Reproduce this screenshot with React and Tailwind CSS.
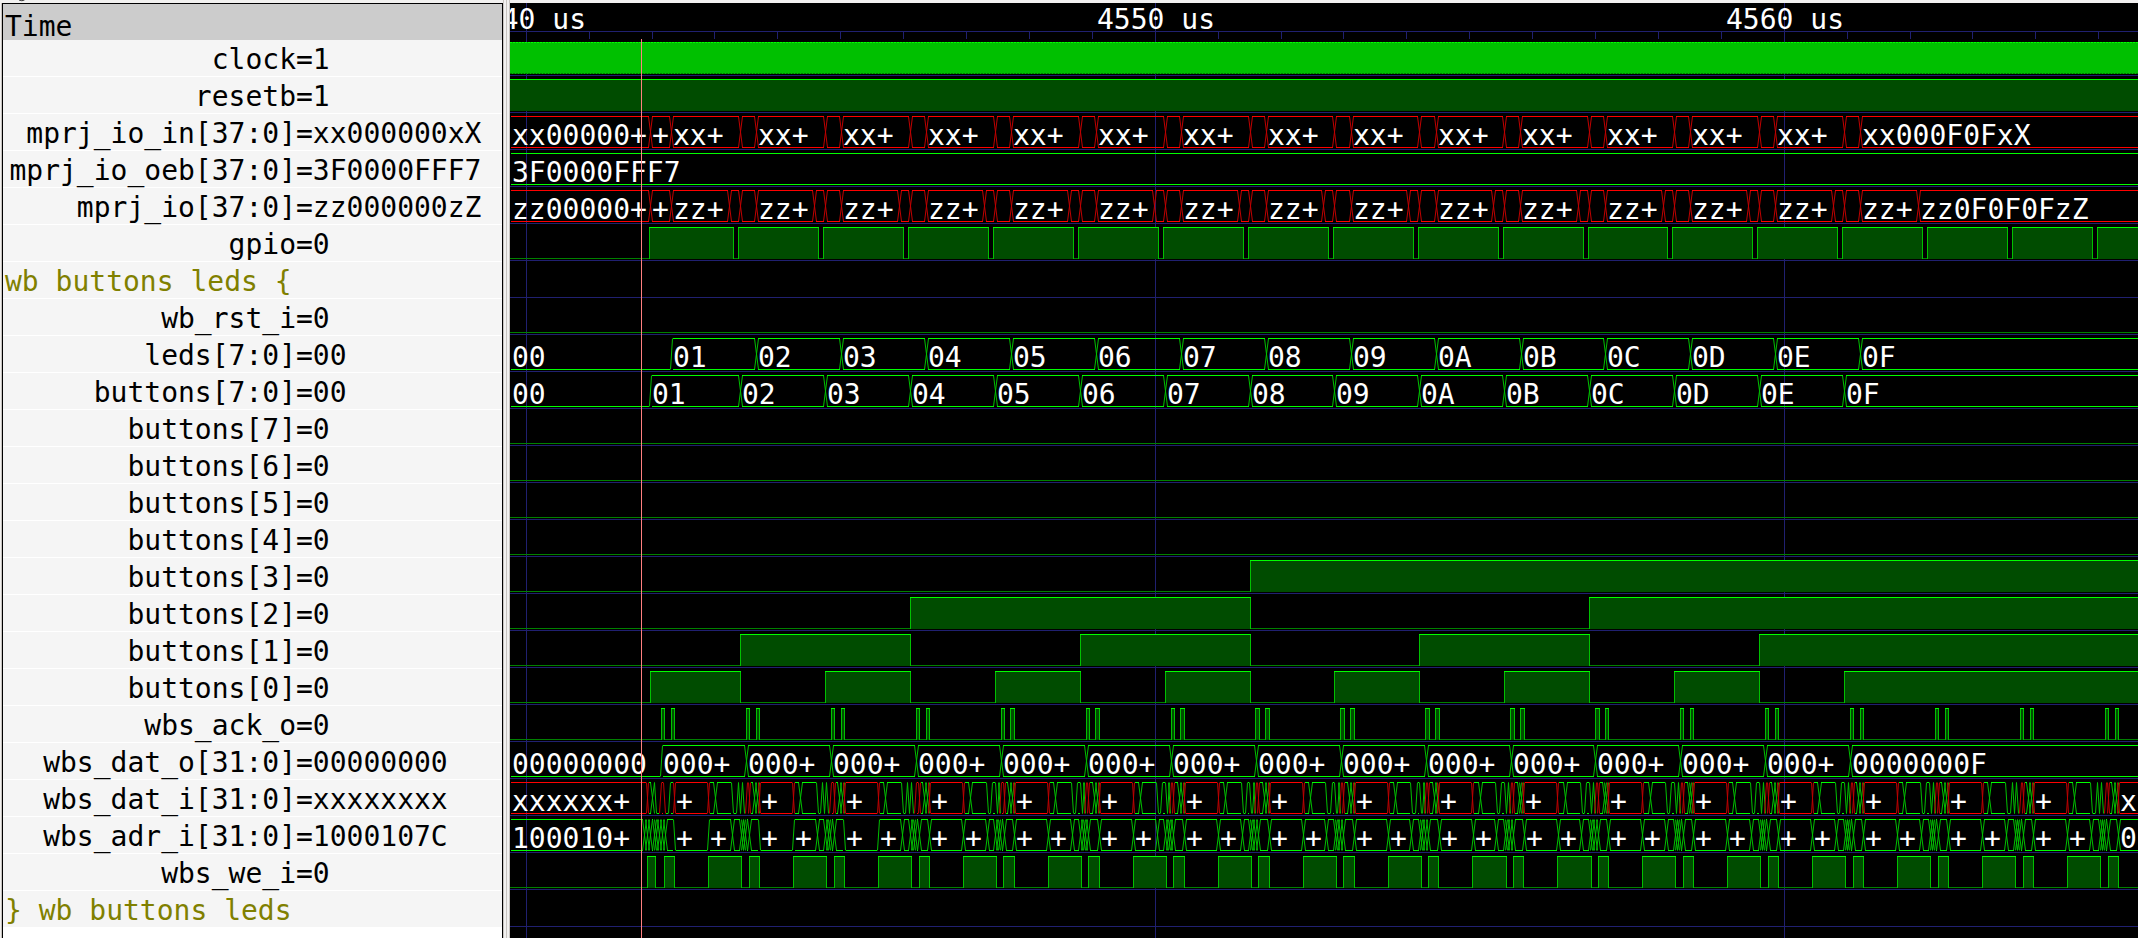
import React from "react";

const ROW = 37;
const ORIGIN = 510;
const PERIOD = 84.94;
const END = 4000;
const HI = 3.5;
const LO = 34.5;
const GRID = [16, 645, 1274];

const range = (n) => Array.from({ length: n }, (_, i) => i);
const snap = (x) => Math.floor(x) - ORIGIN;

/* Bus: list of [time, kind, label]; kind is v (value), x (unknown) or z (zero). */
const A = 740.4;
const at = (offset, k) => offset + PERIOD * k;

const ioIn = [
  [510, "x", "xx00000+"],
  [650.5, "x", "+"],
  [671.5, "x", "xx+"],
  ...range(14).flatMap((k) => [
    [at(A, k), "x", ""],
    [at(A + 16.1, k), "x", k === 13 ? "xx000F0FxX" : "xx+"],
  ]),
];

const ioPads = [
  [510, "x", "zz00000+"],
  [650.5, "x", "+"],
  [671.5, "x", "zz+"],
  ...range(14).flatMap((k) => [
    [at(A - 11, k), "x", ""],
    [at(A, k), "x", ""],
    [at(A + 16.1, k), "x", "zz+"],
  ]),
  [at(A - 11, 14), "x", "zz0F0F0FzZ"],
];

const hex = (n) => "0" + n.toString(16).toUpperCase();

const leds = [
  [510, "z", "00"],
  ...range(15).map((k) => [at(671.6, k), "v", hex(k + 1)]),
];

const buttons = [
  [510, "z", "00"],
  [650.7, "v", "01"],
  ...range(14).map((k) => [at(A, k), "v", hex(k + 2)]),
];

const datO = [
  [510, "z", "00000000"],
  ...range(15).map((k) => [at(661.6, k), "v", k === 14 ? "0000000F" : "000+"]),
];

const datI = [
  [510, "x", "xxxxxx+"],
  [647, "v", ""],
  [652.3, "v", ""],
  [655.3, "z", ""],
  [660.7, "x", ""],
  [664, "z", ""],
  [669.5, "v", ""],
  ...range(17).flatMap((k) => [
    [at(674.5, k), "x", "+"],
    [at(708.5, k), "v", ""],
    [at(715.7, k), "v", ""],
    [at(732.4, k), "z", ""],
    ...(k > 2 && k < 15
      ? [
          [at(736.5, k), "v", ""],
          [at(741.3, k), "z", ""],
          [at(743.5, k), "v", ""],
          [at(745, k), "z", ""],
        ]
      : [
          [at(737, k), "v", ""],
          [at(739, k), "z", ""],
          [at(741, k), "v", ""],
          [at(743, k), "z", ""],
        ]),
    [at(746, k), "x", ""],
    [at(749.2, k), "v", ""],
    [at(754.7, k), "v", ""],
    [at(757.5, k), "v", ""],
  ]),
  [at(674.5, 17), "x", "x"],
];

const adrI = [
  [510, "v", "100010+"],
  ...[644.3, 647.3, 650.7, 654, 656.7, 659.3, 662, 665].map((t) => [t, "v", ""]),
  ...range(17).flatMap((k) => [
    [at(674.6, k), k < 3 ? "z" : "v", "+"],
    [at(708.6, k), "v", "+"],
    [at(732.4, k), "v", ""],
    [at(741, k), "v", ""],
    [at(743.3, k), "v", ""],
    [at(745.6, k), "v", ""],
    [at(749.2, k), "v", ""],
  ]),
  [at(674.6, 17), "v", "0"],
];

/* Bit: list of [rise, fall] pulses. */
const gpio = range(18).map((k) => [k ? at(738.6 - PERIOD, k) : 649.4, at(733.6, k)]);
const ack = range(20).flatMap((k) => [
  [at(661.4, k), at(664.7, k)],
  [at(671.2, k), at(674.6, k)],
]);
const we = [
  [647.4, 655.6],
  ...range(20).flatMap((k) => [
    [at(664.2, k), at(674.5, k)],
    [at(708.5, k), at(741.6, k)],
  ]),
];
const b0 = [
  [650.5, A],
  ...[1, 3, 5, 7, 9, 11].map((k) => [at(A, k), at(A, k + 1)]),
  [at(A, 13), END],
];
const b1 = [
  [A, at(A, 2)],
  [at(A, 4), at(A, 6)],
  [at(A, 8), at(A, 10)],
  [at(A, 12), END],
];
const b2 = [
  [at(A, 2), at(A, 6)],
  [at(A, 10), END],
];
const b3 = [[at(A, 6), END]];

const SIGNALS = [
  { name: "clock", value: "1", clock: true },
  { name: "resetb", value: "1", bit: [[400, END]] },
  { name: "mprj_io_in[37:0]", value: "xx000000xX", bus: ioIn },
  { name: "mprj_io_oeb[37:0]", value: "3F0000FFF7", bus: [[510, "v", "3F0000FFF7"]] },
  { name: "mprj_io[37:0]", value: "zz000000zZ", bus: ioPads },
  { name: "gpio", value: "0", bit: gpio },
  { group: "wb buttons leds {" },
  { name: "wb_rst_i", value: "0", bit: [] },
  { name: "leds[7:0]", value: "00", bus: leds },
  { name: "buttons[7:0]", value: "00", bus: buttons },
  { name: "buttons[7]", value: "0", bit: [] },
  { name: "buttons[6]", value: "0", bit: [] },
  { name: "buttons[5]", value: "0", bit: [] },
  { name: "buttons[4]", value: "0", bit: [] },
  { name: "buttons[3]", value: "0", bit: b3 },
  { name: "buttons[2]", value: "0", bit: b2 },
  { name: "buttons[1]", value: "0", bit: b1 },
  { name: "buttons[0]", value: "0", bit: b0 },
  { name: "wbs_ack_o", value: "0", bit: ack },
  { name: "wbs_dat_o[31:0]", value: "00000000", bus: datO },
  { name: "wbs_dat_i[31:0]", value: "xxxxxxxx", bus: datI },
  { name: "wbs_adr_i[31:0]", value: "1000107C", bus: adrI },
  { name: "wbs_we_i", value: "0", bit: we },
  { group: "} wb buttons leds" },
];

function Grid({ height }) {
  return GRID.map((x) => <rect key={x} x={x} y={0} width={1} height={height} fill="#202070" />);
}

function Clock() {
  return (
    <>
      <rect x={0} y={3} width={END} height={32} fill="#00c000" />
      <path d={`M0 ${HI}H${END}`} stroke="#00ff00" strokeDasharray="2 1" />
      <path d={`M0 ${LO}H${END}`} stroke="#008000" strokeDasharray="2 1" />
    </>
  );
}

function Bit({ pulses }) {
  return (
    <>
      <rect x={0} y={34} width={END} height={1} fill="#008000" />
      {pulses.map(([rise, fall]) => {
        const x = snap(rise);
        const w = snap(fall) - x;
        return (
          <g key={rise}>
            <rect x={x} y={3} width={w + 1} height={32} fill="#00c000" />
            <rect x={x + 1} y={4} width={w - 1} height={31} fill="#004c00" />
            <rect x={x} y={3} width={w + 1} height={1} fill="#00ff00" />
          </g>
        );
      })}
    </>
  );
}

function Bus({ segments }) {
  const flat = { green: "", red: "" };
  const slant = { green: "", red: "" };
  segments.forEach(([time, kind], i) => {
    const x = snap(time) + 0.5;
    const next = segments[i + 1];
    const end = next ? snap(next[0]) + 0.5 : END;
    const prev = i ? segments[i - 1][1] : null;
    const color = kind === "x" ? "red" : "green";
    const from = i ? x + 1.5 : 1;
    const to = Math.max(end - 1.5, from);
    if (kind !== "z") flat[color] += `M${from} ${HI}H${to}`;
    flat[color] += `M${from} ${LO}H${to}`;
    if (!prev) return;
    const edge = kind === "x" || prev === "x" ? "red" : "green";
    const half = prev !== "z" && kind !== "z" && prev === kind ? 2 : 1;
    if (prev !== "z") slant[edge] += `M${x - half} ${HI}L${x + half} ${LO}`;
    if (kind !== "z") slant[edge] += `M${x - half} ${LO}L${x + half} ${HI}`;
  });
  return (
    <>
      <path d={slant.green} stroke="#00c000" fill="none" />
      <path d={slant.red} stroke="#c00000" fill="none" />
      <path d={flat.green} stroke="#00ff00" fill="none" />
      <path d={flat.red} stroke="#ff0000" fill="none" />
      {segments.map(([time, , label]) =>
        label ? (
          <text key={time} x={snap(time) + 2} y={32} fill="#fff">
            {label}
          </text>
        ) : null
      )}
    </>
  );
}

function Wave({ signal }) {
  return (
    <svg className="block h-[37px] w-full shrink-0 overflow-visible" aria-label={signal.name}>
      <Grid height={ROW} />
      <rect x={0} y={36} width={END} height={1} fill="#202070" />
      {signal.clock && <Clock />}
      {signal.bit && <Bit pulses={signal.bit} />}
      {signal.bus && <Bus segments={signal.bus} />}
    </svg>
  );
}

function Timeline() {
  return (
    <svg className="block h-[36px] w-full shrink-0 overflow-visible" aria-label="Time scale">
      <Grid height={36} />
      <rect x={0} y={28} width={END} height={1} fill="#202070" />
      {range(40).map((k) => (
        <rect key={k} x={Math.floor(16.2 + 62.9 * k)} y={28} width={1} height={8} fill="#202070" />
      ))}
      {GRID.map((x, i) => (
        <text key={x} x={x - 58} y={26} fill="#fff">
          {4540 + i * 10} us
        </text>
      ))}
    </svg>
  );
}

function SignalRow({ signal }) {
  return (
    <li className="flex h-[37px] shrink-0 border-b border-white bg-[#f5f5f5] pt-px pl-0.5 leading-[37px] whitespace-pre">
      {signal.group ? (
        <span className="text-[#808000]">{signal.group}</span>
      ) : (
        <>
          <span className="w-[291px] shrink-0 text-right">{signal.name}</span>
          <span>={signal.value}</span>
        </>
      )}
    </li>
  );
}

export default function App() {
  return (
    <main className="flex h-screen overflow-hidden bg-[#f2f1f0] font-['DejaVu_Sans_Mono',monospace] text-[28px]">
      <section className="flex w-[503px] shrink-0 flex-col pl-px" aria-label="Signals">
        <svg className="block h-[3px] w-full shrink-0" aria-hidden="true">
          <path d="M18 0Q21 1.5 23.500 0" stroke="#333" fill="none" />
        </svg>
        <div className="flex min-h-0 flex-1 flex-col border-l border-[#c8c4c0]">
          <div className="flex min-h-0 flex-1 flex-col overflow-hidden border-x border-t border-black bg-white text-black">
            <h1 className="h-9 shrink-0 bg-[#cccccc] pt-[5px] pl-0.5 leading-9">Time</h1>
            <ul className="flex flex-col">
              {SIGNALS.map((s) => (
                <SignalRow key={s.name ?? s.group} signal={s} />
              ))}
            </ul>
          </div>
        </div>
      </section>
      <div className="flex w-[7px] shrink-0 justify-between border-x border-[#c8c4c0]">
        <span className="ml-0.5 w-px bg-[#c8c4c0]" />
      </div>
      <section className="flex min-w-0 flex-1 flex-col pt-[3px]" aria-label="Waves">
        <div className="relative flex min-h-0 flex-1 flex-col overflow-hidden bg-black">
          <Timeline />
          {SIGNALS.map((s) => (
            <Wave key={s.name ?? s.group} signal={s} />
          ))}
          <svg className="block min-h-0 w-full flex-1" aria-hidden="true">
            <Grid height={2000} />
          </svg>
          <div className="absolute top-9 bottom-0 left-[131px] w-px bg-[#ff8080]" />
        </div>
      </section>
    </main>
  );
}
